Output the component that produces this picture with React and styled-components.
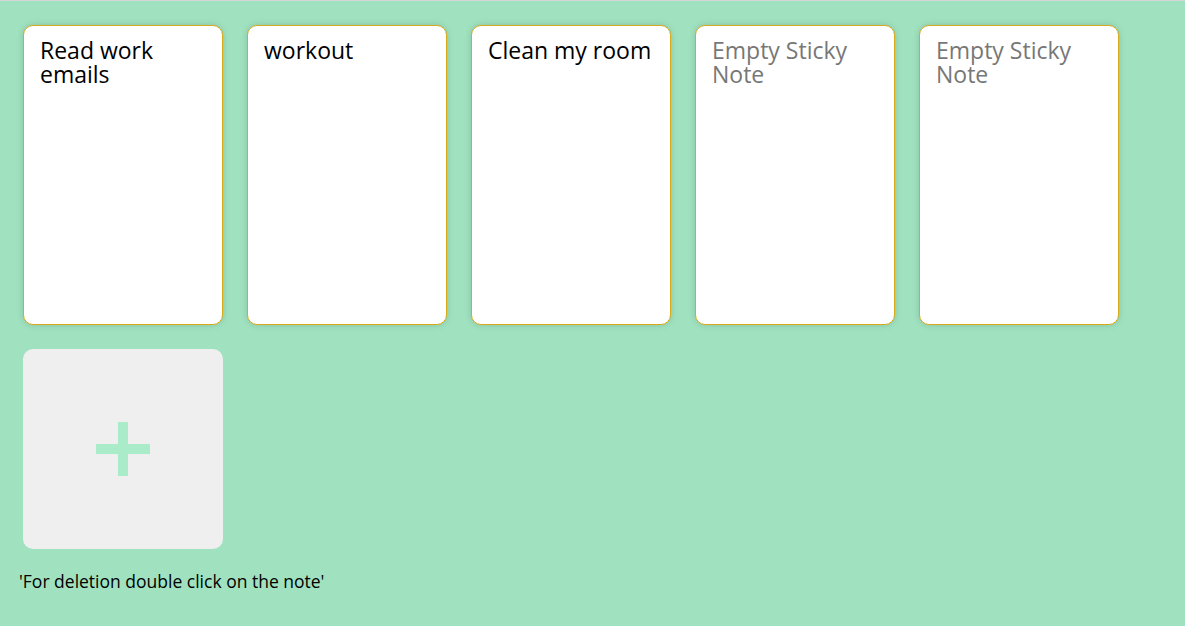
import React from "react";
import styled, { createGlobalStyle } from "styled-components";

const GlobalStyle = createGlobalStyle`
  html, body {
    margin: 0;
    padding: 0;
    background: #a0e2bf;
    font-family: "Open Sans", "Liberation Sans", sans-serif;
  }
`;

const Page = styled.div`
  min-height: 626px;
  box-sizing: border-box;
  border-top: 1px solid #d6d6d6;
  padding: 24px 23px 0 23px;
`;

const Board = styled.div`
  display: grid;
  grid-template-columns: repeat(auto-fill, 200px);
  gap: 24px;
`;

const Note = styled.textarea`
  width: 200px;
  height: 300px;
  box-sizing: border-box;
  padding: 12px 16px;
  border: 1px solid #d8a91a;
  border-radius: 10px;
  background: #fff;
  box-shadow: 0 0 7px rgba(0, 0, 0, 0.15);
  resize: none;
  outline: none;
  font-family: "Open Sans", "Liberation Sans", sans-serif;
  font-size: 23px;
  line-height: 24px;
  color: #000;
  overflow: hidden;

  &::placeholder {
    color: #777;
  }
`;

const AddButton = styled.button`
  width: 200px;
  height: 200px;
  border: none;
  border-radius: 10px;
  background: #efefef;
  display: flex;
  align-items: center;
  justify-content: center;
  cursor: pointer;
  padding: 0;
`;

const Hint = styled.p`
  margin: 20px 0 0 -4px;
  font-size: 17.5px;
  color: #000;
`;

const notes = [
  { id: 1, content: "Read work emails" },
  { id: 2, content: "workout" },
  { id: 3, content: "Clean my room" },
  { id: 4, content: "" },
  { id: 5, content: "" },
];

export default function App() {
  return (
    <>
      <GlobalStyle />
      <Page>
        <Board>
          {notes.map((note) => (
            <Note
              key={note.id}
              defaultValue={note.content}
              placeholder="Empty Sticky Note"
            />
          ))}
          <AddButton>
            <svg width="54" height="54" viewBox="0 0 54 54">
              <rect x="22" y="0" width="10" height="54" fill="#aaecca" />
              <rect x="0" y="22" width="54" height="10" fill="#aaecca" />
            </svg>
          </AddButton>
        </Board>
        <Hint>'For deletion double click on the note'</Hint>
      </Page>
    </>
  );
}
